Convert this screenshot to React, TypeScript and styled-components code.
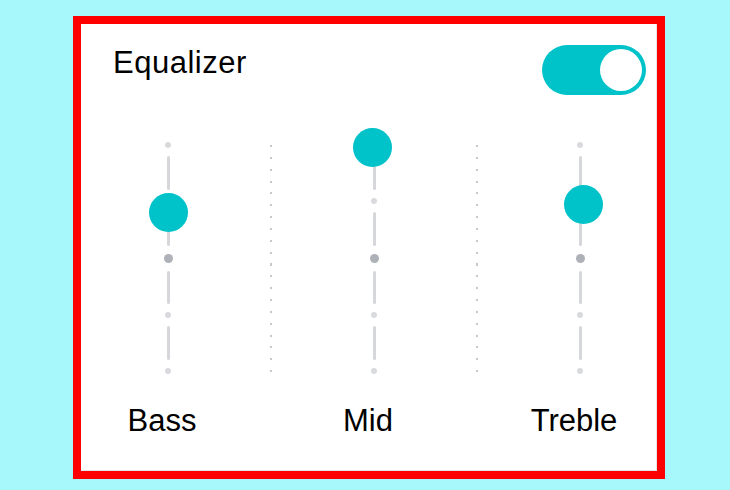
import styled, { createGlobalStyle } from 'styled-components';

const GlobalStyle = createGlobalStyle`
  html, body {
    margin: 0;
    padding: 0;
    background: #a7f8fb;
    font-family: 'Liberation Sans', Arial, sans-serif;
  }
`;

const Frame = styled.div`
  box-sizing: border-box;
  width: 592px;
  height: 463px;
  margin: 16px 0 0 73px;
  border: 8px solid #ff0000;
  background: #ffffff;
  box-shadow: inset -1px -1px 0 #e4e4e4;
  display: flex;
  flex-direction: column;
`;

const Header = styled.div`
  display: flex;
  justify-content: space-between;
  align-items: flex-start;
  padding: 21px 11px 0 32px;
`;

const Title = styled.div`
  margin-top: 2px;
  font-size: 31px;
  line-height: 31px;
  letter-spacing: 0.5px;
  color: #000;
`;

const Toggle = styled.div<{ on?: boolean }>`
  box-sizing: border-box;
  width: 104px;
  height: 50px;
  padding: 4px;
  border-radius: 25px;
  background: ${(p) => (p.on ? '#00c3ca' : '#cfd2d6')};
  display: flex;
  justify-content: ${(p) => (p.on ? 'flex-end' : 'flex-start')};
`;

const ToggleKnob = styled.div`
  width: 42px;
  height: 42px;
  border-radius: 50%;
  background: #ffffff;
`;

const Bands = styled.div`
  display: grid;
  grid-template-columns: 150px 2px 150px 2px 150px;
  column-gap: 27px;
  padding-left: 12px;
  margin-top: 47px;
`;

const Column = styled.div`
  display: flex;
  justify-content: center;
`;

const Track = styled.div`
  position: relative;
  width: 40px;
  height: 232px;
  display: flex;
  flex-direction: column;
  align-items: center;
`;

const Tick = styled.div<{ major?: boolean }>`
  flex: none;
  width: ${(p) => (p.major ? 9 : 6)}px;
  height: ${(p) => (p.major ? 9 : 6)}px;
  border-radius: 50%;
  background: ${(p) => (p.major ? '#aeb1b8' : '#d9dadd')};
`;

const Segment = styled.div`
  flex: 1;
  width: 3px;
  margin: 8px 0;
  border-radius: 2px;
  background: #d6d7db;
`;

const Thumb = styled.div`
  position: absolute;
  width: 39px;
  height: 39px;
  border-radius: 50%;
  background: #00c3ca;
`;

const Divider = styled.div`
  margin-top: 3px;
  height: 228px;
  background: repeating-linear-gradient(
    to bottom,
    #c6c8cc 0 2px,
    transparent 2px 11.85px
  );
`;

const Labels = styled.div`
  display: grid;
  grid-template-columns: 150px 150px 150px;
  column-gap: 56px;
  padding-left: 12px;
  margin-top: 31px;
`;

const Label = styled.div`
  padding-right: 12px;
  text-align: center;
  font-size: 31px;
  line-height: 31px;
  color: #000;
`;

interface Band {
  name: string;
  level: number; // 0 = top, 1 = bottom
  drift: number; // thumb sits a little off the rail
}

const bands: Band[] = [
  { name: 'Bass', level: 0.3, drift: 0 },
  { name: 'Mid', level: 0.012, drift: -2 },
  { name: 'Treble', level: 0.262, drift: 3 },
];

// tick centres span 3px..229px inside the track
const thumbTop = (level: number) => 3 + level * 226 - 19.5;

function Slider({ level, drift }: { level: number; drift: number }) {
  return (
    <Column>
      <Track>
        <Tick />
        <Segment />
        <Tick />
        <Segment />
        <Tick major />
        <Segment />
        <Tick />
        <Segment />
        <Tick />
        <Thumb style={{ top: thumbTop(level), left: 0.5 + drift }} />
      </Track>
    </Column>
  );
}

export default function App(): JSX.Element {
  return (
    <>
      <GlobalStyle />
      <Frame>
        <Header>
          <Title>Equalizer</Title>
          <Toggle on>
            <ToggleKnob />
          </Toggle>
        </Header>
        <Bands>
          <Slider level={bands[0].level} drift={bands[0].drift} />
          <Divider />
          <Slider level={bands[1].level} drift={bands[1].drift} />
          <Divider />
          <Slider level={bands[2].level} drift={bands[2].drift} />
        </Bands>
        <Labels>
          {bands.map((b) => (
            <Label key={b.name}>{b.name}</Label>
          ))}
        </Labels>
      </Frame>
    </>
  );
}
